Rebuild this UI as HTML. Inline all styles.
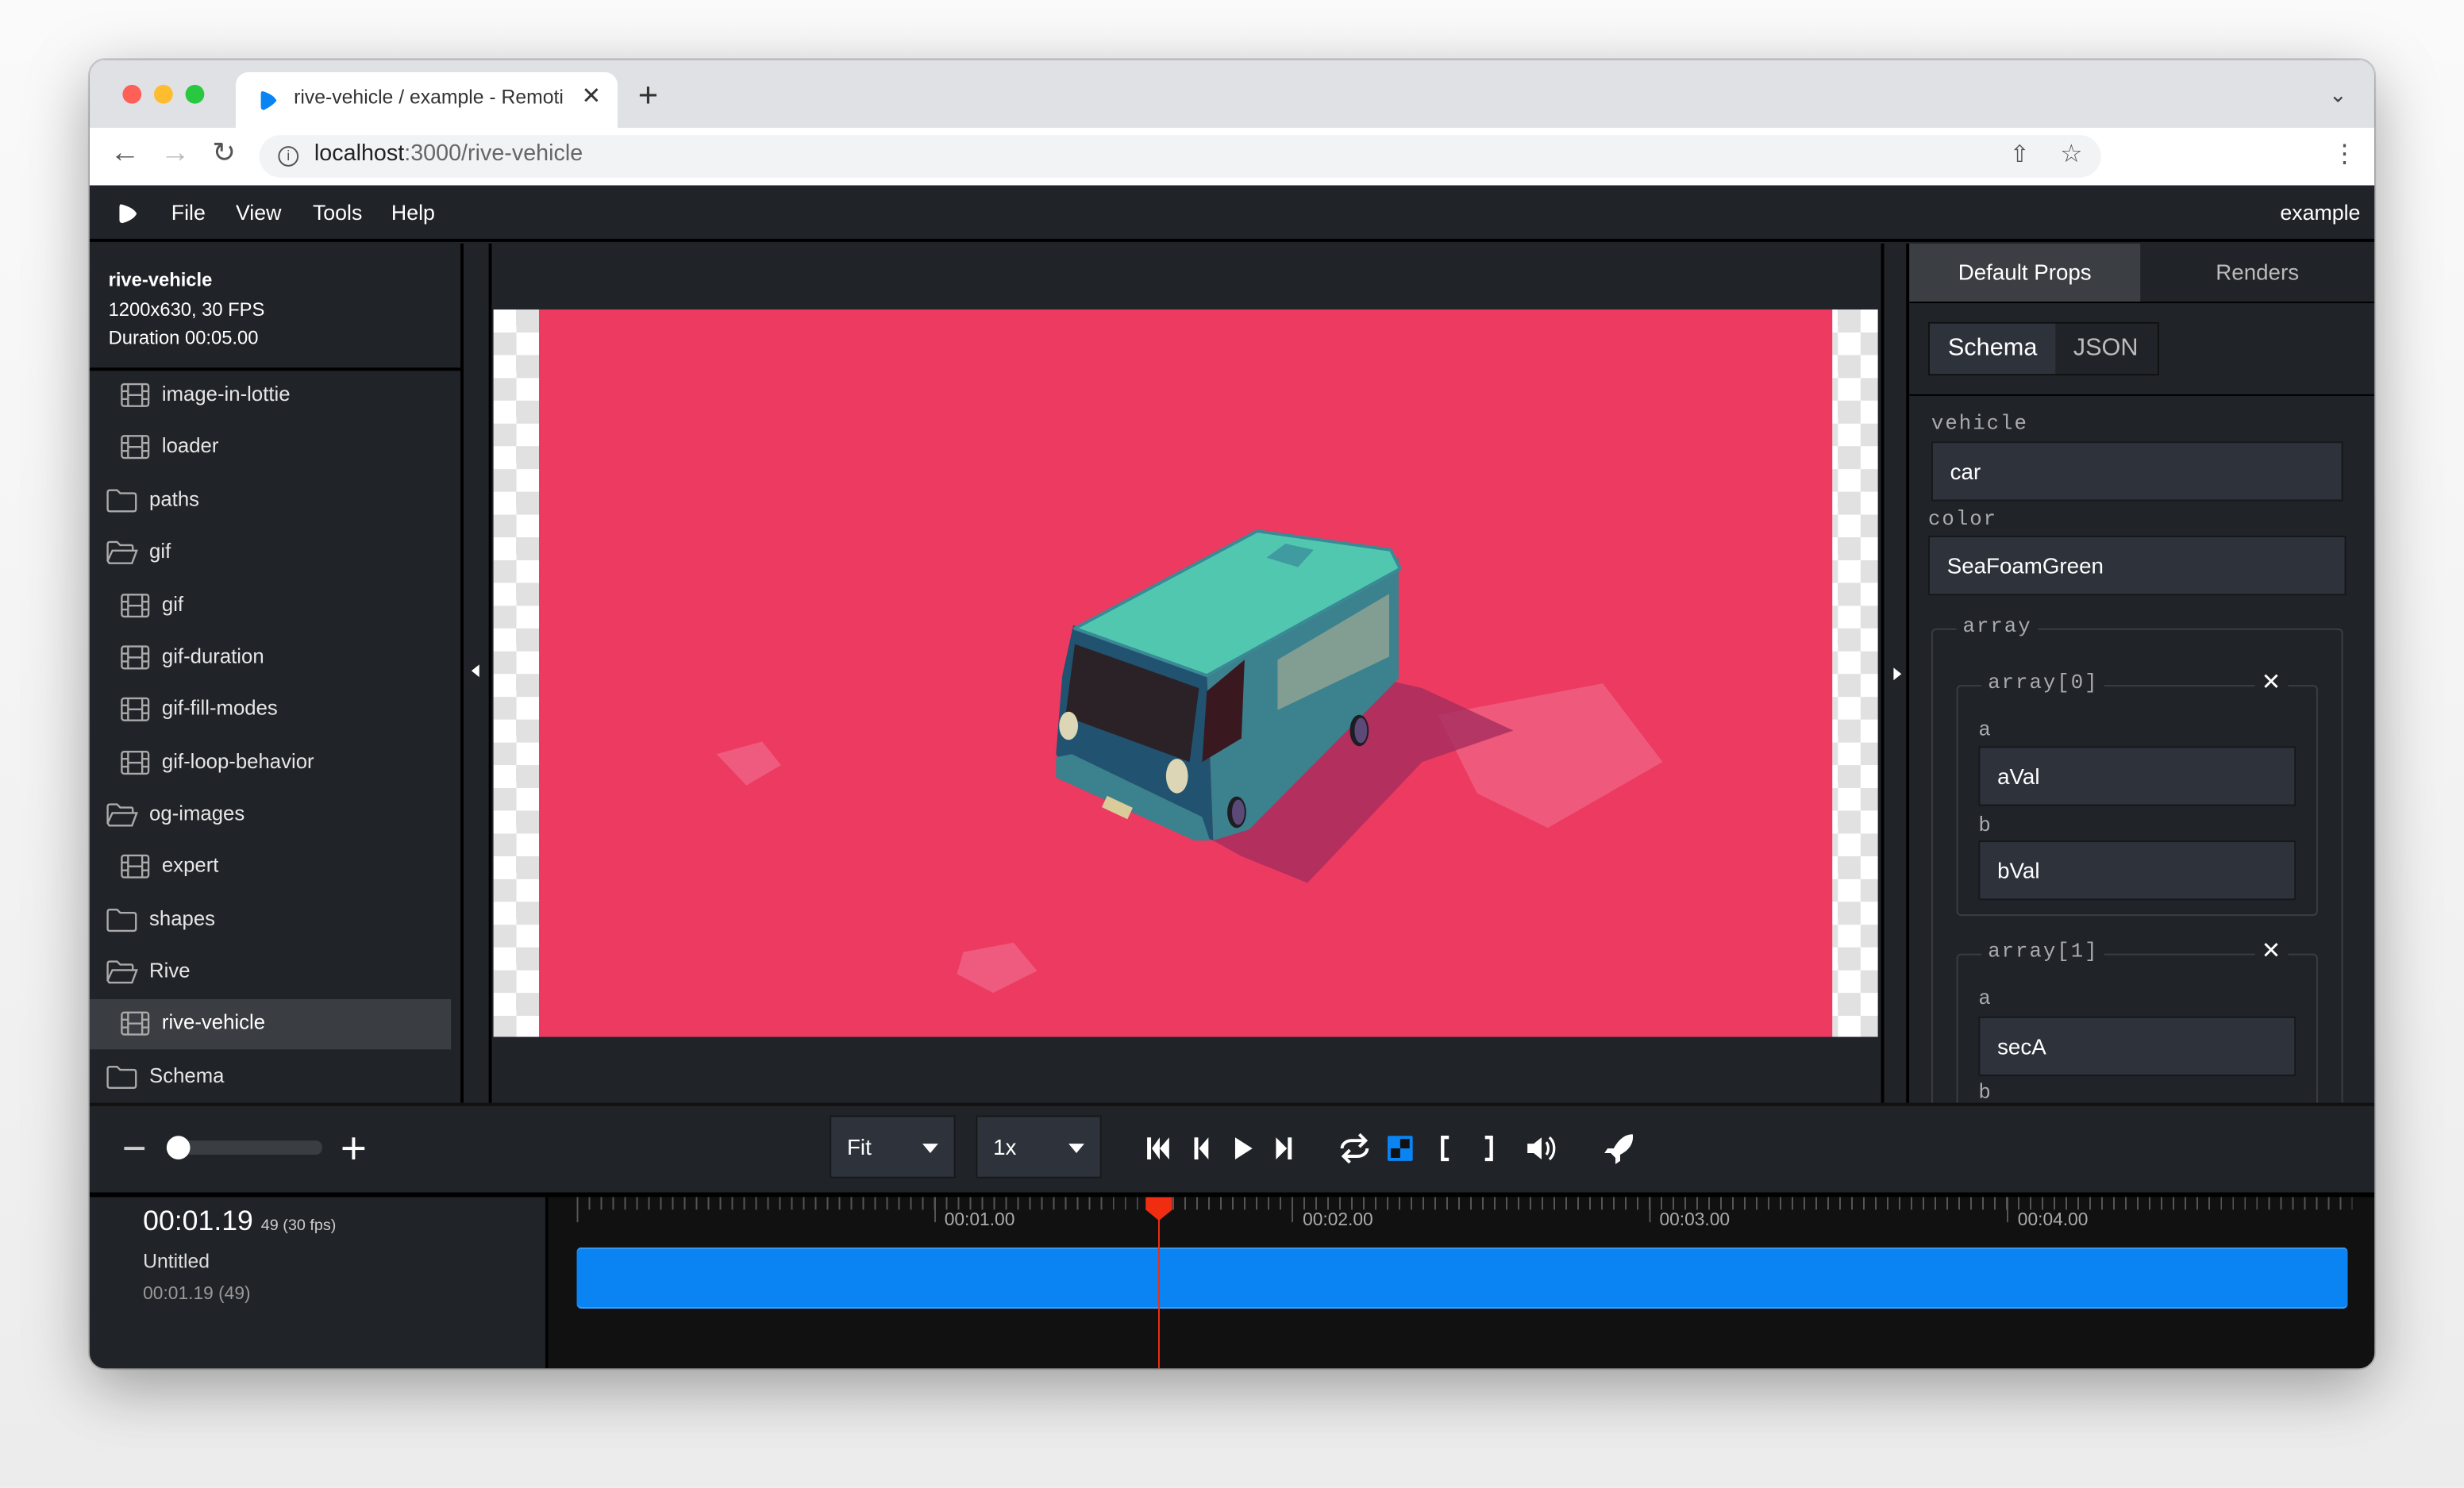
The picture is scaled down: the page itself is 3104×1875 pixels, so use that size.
<!DOCTYPE html>
<html><head><meta charset="utf-8"><style>
*{box-sizing:border-box;margin:0;padding:0}
html,body{width:3104px;height:1874px;overflow:hidden;background:#f4f4f4}
#s{position:absolute;left:0;top:0;width:1568px;height:947px;transform:scale(1.9796);transform-origin:0 0;font-family:"Liberation Sans",sans-serif;background:linear-gradient(#fafafa,#ececec)}
.a{position:absolute}
.win{left:57px;top:38px;width:1454px;height:833px;border-radius:10px;overflow:hidden;background:#202328;box-shadow:0 12px 40px rgba(0,0,0,.35),0 0 0 1px rgba(0,0,0,.15)}
.w{color:#fff}
.item{position:absolute;left:0;width:230px;height:32px;color:#e6e6e6;font-size:13px;line-height:32px}
.mono{font-family:"Liberation Mono",monospace;color:#a9abae;font-size:13px;letter-spacing:1px}
.inp{position:absolute;background:#2e333b;border:1px solid #16181b;color:#fff;font-size:14px;padding-left:11px;line-height:36px}
.fs{position:absolute;border:1px solid #3a3d42;border-radius:3px}
</style></head><body><div id="s">
<div class="a win">
 <div class="a" style="left:0;top:0;width:1454px;height:43px;background:#dfe1e5"></div>
 <div class="a" style="left:21px;top:16px;width:12px;height:12px;border-radius:50%;background:#fe5f57"></div>
 <div class="a" style="left:41px;top:16px;width:12px;height:12px;border-radius:50%;background:#febc2e"></div>
 <div class="a" style="left:61px;top:16px;width:12px;height:12px;border-radius:50%;background:#28c840"></div>
 <div class="a" style="left:93px;top:8px;width:243px;height:36px;background:#fff;border-radius:8px 8px 0 0"></div>
 <svg class="a" style="left:108px;top:19px" width="12" height="14" viewBox="0 0 12 14"><path d="M2 1 Q1 1 1 3 L1 11 Q1 13 3 13 Q9 10 11 7 Q9 3 2 1Z" fill="#0b84f3"/></svg>
 <div class="a" style="left:130px;top:17px;font-size:12.5px;color:#333;width:175px;white-space:nowrap;overflow:hidden">rive-vehicle / example - Remoti</div>
 <div class="a" style="left:313px;top:14px;font-size:15px;color:#333">✕</div>
 <div class="a" style="left:349px;top:10px;font-size:22px;color:#333">+</div>
 <div class="a" style="left:1425px;top:14px;font-size:14px;color:#444">⌄</div>
 <div class="a" style="left:0;top:43px;width:1454px;height:37px;background:#fff"></div>
 <div class="a" style="left:13px;top:49px;font-size:19px;color:#555">←</div>
 <div class="a" style="left:45px;top:49px;font-size:19px;color:#bbb">→</div>
 <div class="a" style="left:78px;top:49px;font-size:18px;color:#555">↻</div>
 <div class="a" style="left:108px;top:48px;width:1172px;height:27px;background:#f1f3f4;border-radius:14px"></div>
 <div class="a" style="left:120px;top:55px;width:13px;height:13px;border:1.3px solid #555;border-radius:50%;font-size:9px;text-align:center;line-height:11px;color:#555">i</div>
 <div class="a" style="left:143px;top:52px;font-size:14.5px;color:#222">localhost<span style="color:#666">:3000/rive-vehicle</span></div>
 <div class="a" style="left:1222px;top:51px;font-size:15px;color:#555">⇧</div>
 <div class="a" style="left:1254px;top:50px;font-size:16px;color:#555">☆</div>
 <div class="a" style="left:1427px;top:50px;font-size:16px;color:#555">⋮</div>
 <div class="a" style="left:0;top:80px;width:1454px;height:36px;background:#202328;border-bottom:2px solid #000"></div>
 <svg class="a" style="left:18px;top:91px" width="14" height="14" viewBox="0 0 14 14"><path d="M2 1 Q1 1 1 3 L1 11 Q1 13 3 13 Q10 11 12 7 Q10 3 2 1Z" fill="#fff"/></svg>
 <div class="a w" style="left:52px;top:90px;font-size:13.5px">File</div>
 <div class="a w" style="left:93px;top:90px;font-size:13.5px">View</div>
 <div class="a w" style="left:142px;top:90px;font-size:13.5px">Tools</div>
 <div class="a w" style="left:192px;top:90px;font-size:13.5px">Help</div>
 <div class="a w" style="left:1394px;top:90px;font-size:13.5px">example</div>
 <div class="a" style="left:0;top:117px;width:236px;height:547px;background:#202328"></div>
 <div class="a w" style="left:12px;top:131px;font-size:12px;line-height:18.5px"><b>rive-vehicle</b><br>1200x630, 30 FPS<br>Duration 00:05.00</div>
 <div class="a" style="left:0;top:196px;width:236px;height:2px;background:#000"></div>
 <div class="a" style="left:236px;top:117px;width:2px;height:547px;background:#000"></div>
 <div class="a" style="left:238px;top:117px;width:18px;height:547px;background:#202328"></div>
 <div class="a" style="left:254px;top:117px;width:2px;height:547px;background:#000"></div>
 <div class="a" style="left:243px;top:385px;width:0;height:0;border-top:4px solid transparent;border-bottom:4px solid transparent;border-right:5px solid #fff"></div>
 <div class="a" style="left:0;top:598px;width:230px;height:32px;background:#3a3d42"></div>
 <svg class="a" style="left:0;top:0" width="236" height="664">
  <defs>
   <g id="film"><rect x="0.5" y="0.5" width="17" height="14" rx="1.5" fill="none" stroke="#aaa" stroke-width="1.2"/><path d="M4.5 0.5V14.5M13.5 0.5V14.5M0.5 5H4.5M0.5 10H4.5M13.5 5H17.5M13.5 10H17.5M4.5 7.5H13.5" stroke="#aaa" stroke-width="1.2"/></g>
   <g id="fc"><path d="M0.5 2.5Q0.5 1 2 1H6.5L8.5 3H17Q18.5 3 18.5 4.5V13Q18.5 14.5 17 14.5H2Q0.5 14.5 0.5 13Z" fill="none" stroke="#aaa" stroke-width="1.2"/></g>
   <g id="fo"><path d="M0.5 13V2.5Q0.5 1 2 1H6.5L8.5 3H15.5Q16.5 3 16.5 4.5V6M0.5 13L3.5 6.5H19L16 14.5H1.5Z" fill="none" stroke="#aaa" stroke-width="1.2"/></g>
  </defs>
  <use href="#film" x="20" y="206"/><use href="#film" x="20" y="239"/>
  <use href="#fc" x="11" y="273"/><use href="#fo" x="11" y="306"/>
  <use href="#film" x="20" y="340"/><use href="#film" x="20" y="373"/><use href="#film" x="20" y="406"/><use href="#film" x="20" y="440"/>
  <use href="#fo" x="11" y="473"/><use href="#film" x="20" y="506"/>
  <use href="#fc" x="11" y="540"/><use href="#fo" x="11" y="573"/>
  <use href="#film" x="20" y="606"/><use href="#fc" x="11" y="640"/>
 </svg>
 <div class="item" style="top:197px;left:46px">image-in-lottie</div>
 <div class="item" style="top:230px;left:46px">loader</div>
 <div class="item" style="top:264px;left:38px">paths</div>
 <div class="item" style="top:297px;left:38px">gif</div>
 <div class="item" style="top:331px;left:46px">gif</div>
 <div class="item" style="top:364px;left:46px">gif-duration</div>
 <div class="item" style="top:397px;left:46px">gif-fill-modes</div>
 <div class="item" style="top:431px;left:46px">gif-loop-behavior</div>
 <div class="item" style="top:464px;left:38px">og-images</div>
 <div class="item" style="top:497px;left:46px">expert</div>
 <div class="item" style="top:531px;left:38px">shapes</div>
 <div class="item" style="top:564px;left:38px">Rive</div>
 <div class="item" style="top:597px;left:46px;color:#fff">rive-vehicle</div>
 <div class="item" style="top:631px;left:38px">Schema</div>
 <div class="a" style="left:256px;top:117px;width:884px;height:547px;background:#202328"></div>
 <div class="a" style="left:257px;top:159px;width:881px;height:463px;background:repeating-conic-gradient(#e1e1e1 0 25%,#fff 0 50%) 0 0/29px 29px"></div>
 <div class="a" style="left:286px;top:159px;width:823px;height:463px;background:#ec3a61"></div>
 <svg class="a" style="left:0;top:0" width="1454" height="833" viewBox="57 38 1454 833">
  <polygon points="915,455 1020,435 1058,485 985,527 940,505" fill="#f06486" opacity=".75"/>
  <polygon points="456,480 485,472 497,487 475,500" fill="#f06486" opacity=".8"/>
  <polygon points="613,606 645,600 660,618 632,632 609,620" fill="#f06486" opacity=".8"/>
  <polygon points="718,505 790,545 832,562 905,485 963,465 905,438 870,430 800,510" fill="#a42d5e" opacity=".8"/>
  <polygon points="768,428 890,355 890,432 795,528 772,535" fill="#3b818e"/>
  <polygon points="683,398 768,428 772,535 685,500 672,480 676,430" fill="#215270"/>
  <polygon points="684,400 800,338 885,350 891,362 768,430" fill="#52c7b0" stroke="#3a8a95" stroke-width="2" stroke-linejoin="round"/>
  <polygon points="806,355 818,346 836,350 826,361" fill="#3f9b9f"/>
  <polygon points="684,410 763,438 757,485 678,456" fill="#2a2227"/>
  <polygon points="768,440 792,420 790,470 765,485" fill="#3a1820"/>
  <polygon points="813,420 884,378 884,418 813,452" fill="#829e92"/>
  <ellipse cx="680" cy="462" rx="6" ry="9" fill="#dcd6b6"/>
  <ellipse cx="749" cy="494" rx="7" ry="11" fill="#dcd6b6"/>
  <ellipse cx="787" cy="517" rx="6" ry="10" fill="#1e1e22"/><ellipse cx="788" cy="517" rx="4" ry="8" fill="#5b4a78"/>
  <ellipse cx="865" cy="465" rx="6" ry="10" fill="#1e1e22"/><ellipse cx="866" cy="465" rx="4" ry="8" fill="#5b4a78"/>
  <polygon points="672,482 682,480 765,520 770,535 760,535 672,495" fill="#3b818e"/>
  <rect x="702" y="510" width="18" height="8" fill="#d9cb9a" transform="rotate(25 711 514)"/>
 </svg>
 <div class="a" style="left:1140px;top:117px;width:2px;height:547px;background:#000"></div>
 <div class="a" style="left:1142px;top:117px;width:16px;height:547px;background:#202328"></div>
 <div class="a" style="left:1156px;top:117px;width:2px;height:547px;background:#000"></div>
 <div class="a" style="left:1148px;top:387px;width:0;height:0;border-top:4px solid transparent;border-bottom:4px solid transparent;border-left:5px solid #fff"></div>
 <div class="a" style="left:1158px;top:117px;width:296px;height:547px;background:#202328;overflow:hidden">
  <div class="a" style="left:0;top:0;width:147px;height:37px;background:#3b3e43;color:#fff;font-size:14px;text-align:center;line-height:37px">Default Props</div>
  <div class="a" style="left:147px;top:0;width:149px;height:37px;color:#bbb;font-size:14px;text-align:center;line-height:37px">Renders</div>
  <div class="a" style="left:0;top:37px;width:296px;height:1px;background:#000"></div>
  <div class="a" style="left:12px;top:50px;width:147px;height:34px;border:1px solid #111;background:#202328"></div>
  <div class="a" style="left:13px;top:51px;width:80px;height:32px;background:#2e333b;color:#fff;font-size:15.5px;text-align:center;line-height:32px">Schema</div>
  <div class="a" style="left:93px;top:51px;width:64px;height:32px;color:#bbb;font-size:15.5px;text-align:center;line-height:32px">JSON</div>
  <div class="a" style="left:0;top:96px;width:296px;height:1px;background:#000"></div>
  <div class="a mono" style="left:14px;top:107px">vehicle</div>
  <div class="inp" style="left:14px;top:126px;width:262px;height:38px">car</div>
  <div class="a mono" style="left:12px;top:168px">color</div>
  <div class="inp" style="left:12px;top:186px;width:266px;height:38px">SeaFoamGreen</div>
  <div class="fs" style="left:14px;top:245px;width:262px;height:320px"></div>
  <div class="a mono" style="left:30px;top:236px;background:#202328;padding:0 4px">array</div>
  <div class="fs" style="left:30px;top:281px;width:230px;height:147px"></div>
  <div class="a mono" style="left:46px;top:272px;background:#202328;padding:0 4px">array[0]</div>
  <div class="a" style="left:220px;top:270px;color:#fff;font-size:15px;background:#202328;padding:0 4px">✕</div>
  <div class="a mono" style="left:44px;top:302px">a</div>
  <div class="inp" style="left:44px;top:320px;width:202px;height:38px">aVal</div>
  <div class="a mono" style="left:44px;top:363px">b</div>
  <div class="inp" style="left:44px;top:380px;width:202px;height:38px">bVal</div>
  <div class="fs" style="left:30px;top:452px;width:230px;height:147px"></div>
  <div class="a mono" style="left:46px;top:443px;background:#202328;padding:0 4px">array[1]</div>
  <div class="a" style="left:220px;top:441px;color:#fff;font-size:15px;background:#202328;padding:0 4px">✕</div>
  <div class="a mono" style="left:44px;top:473px">a</div>
  <div class="inp" style="left:44px;top:492px;width:202px;height:38px">secA</div>
  <div class="a mono" style="left:44px;top:533px">b</div>
 </div>
 <div class="a" style="left:0;top:664px;width:1454px;height:57px;background:#202328;border-top:2px solid #111"></div>
 <div class="a" style="left:22px;top:692px;width:13px;height:2px;background:#ccc"></div>
 <div class="a" style="left:56px;top:688px;width:92px;height:9px;border-radius:4px;background:#3a3d42"></div>
 <div class="a" style="left:49px;top:685px;width:15px;height:15px;border-radius:50%;background:#fff"></div>
 <div class="a" style="left:167px;top:686px;width:2px;height:14px;background:#fff"></div>
 <div class="a" style="left:161px;top:692px;width:14px;height:2px;background:#fff"></div>
 <div class="a" style="left:471px;top:672px;width:80px;height:40px;background:#2e333b;border:1px solid #16181b;color:#fff;font-size:14px;line-height:38px;padding-left:10px">Fit</div>
 <div class="a" style="left:530px;top:690px;border-left:5px solid transparent;border-right:5px solid transparent;border-top:6px solid #fff"></div>
 <div class="a" style="left:564px;top:672px;width:80px;height:40px;background:#2e333b;border:1px solid #16181b;color:#fff;font-size:14px;line-height:38px;padding-left:10px">1x</div>
 <div class="a" style="left:623px;top:690px;border-left:5px solid transparent;border-right:5px solid transparent;border-top:6px solid #fff"></div>
 <svg class="a" style="left:0;top:664px" width="1454" height="57" viewBox="57 702 1454 57" fill="#fff">
  <path d="M730 724h2.5v14h-2.5zM733 731l5-7v14zM738 731l6-7v14z"/>
  <path d="M760 724h2.5v14h-2.5zM763 731l6-7v14z"/>
  <path d="M786 724l11 7-11 7z"/>
  <path d="M812 724l7 7-7 7zM819.5 724h2.5v14h-2.5z"/>
  <path d="M854 731a6 5 0 0 1 6-5h8M865 722l4 4-4 4M870 731a6 5 0 0 1-6 5h-8M859 740l-4-4 4-4" fill="none" stroke="#fff" stroke-width="2"/>
  <rect x="883" y="723" width="16" height="16" rx="1" fill="#0b84f3"/><rect x="885" y="731" width="6" height="6" fill="#111"/><rect x="891" y="725" width="6" height="6" fill="#111"/>
  <path d="M922 724h-4v14h4" fill="none" stroke="#fff" stroke-width="2.2"/>
  <path d="M945 724h4v14h-4" fill="none" stroke="#fff" stroke-width="2.2"/>
  <path d="M972 728h4l5-4v14l-5-4h-4z"/><path d="M984 727a5 6 0 0 1 0 8M986 724a8 9 0 0 1 0 14" fill="none" stroke="#fff" stroke-width="1.6"/>
  <path d="M1039 722c-6 0-10 5-12 9l-4 0-2 3 4 0 3 3 0 4 3-2 0-4c4-2 9-6 8-13z"/>
 </svg>
 <div class="a" style="left:0;top:721px;width:1454px;height:3px;background:#000"></div>
 <div class="a" style="left:0;top:724px;width:290px;height:109px;background:#202328"></div>
 <div class="a" style="left:290px;top:724px;width:2px;height:109px;background:#000"></div>
 <div class="a" style="left:292px;top:724px;width:1162px;height:109px;background:#111"></div>
 <div class="a w" style="left:34px;top:729px;font-size:18px">00:01.19 <span style="font-size:10px;color:#ccc">49 (30 fps)</span></div>
 <div class="a" style="left:34px;top:758px;font-size:12.5px;color:#ddd">Untitled</div>
 <div class="a" style="left:34px;top:780px;font-size:11.5px;color:#999">00:01.19 (49)</div>
 <div class="a" style="left:310px;top:724px;width:1130px;height:8px;background:repeating-linear-gradient(90deg,#555 0 1px,transparent 1px 7.58px)"></div>
 <div class="a" style="left:310px;top:724px;width:1130px;height:16px;background:repeating-linear-gradient(90deg,#555 0 1px,transparent 1px 227.5px)"></div>
 <div class="a" style="left:544px;top:733px;font-size:11.5px;color:#aaa">00:01.00</div>
 <div class="a" style="left:772px;top:733px;font-size:11.5px;color:#aaa">00:02.00</div>
 <div class="a" style="left:999px;top:733px;font-size:11.5px;color:#aaa">00:03.00</div>
 <div class="a" style="left:1227px;top:733px;font-size:11.5px;color:#aaa">00:04.00</div>
 <div class="a" style="left:310px;top:756px;width:1127px;height:39px;background:#0b84f3;border-radius:3px;border-top:1.5px solid #3c9cf5;border-bottom:1.5px solid #3c9cf5"></div>
 <div class="a" style="left:680px;top:724px;width:1px;height:109px;background:#f02d10"></div>
 <svg class="a" style="left:672px;top:724px" width="17" height="16"><path d="M0 0h17v8l-8.5 7L0 8z" fill="#f02d10"/></svg>
</div>
</div></body></html>
